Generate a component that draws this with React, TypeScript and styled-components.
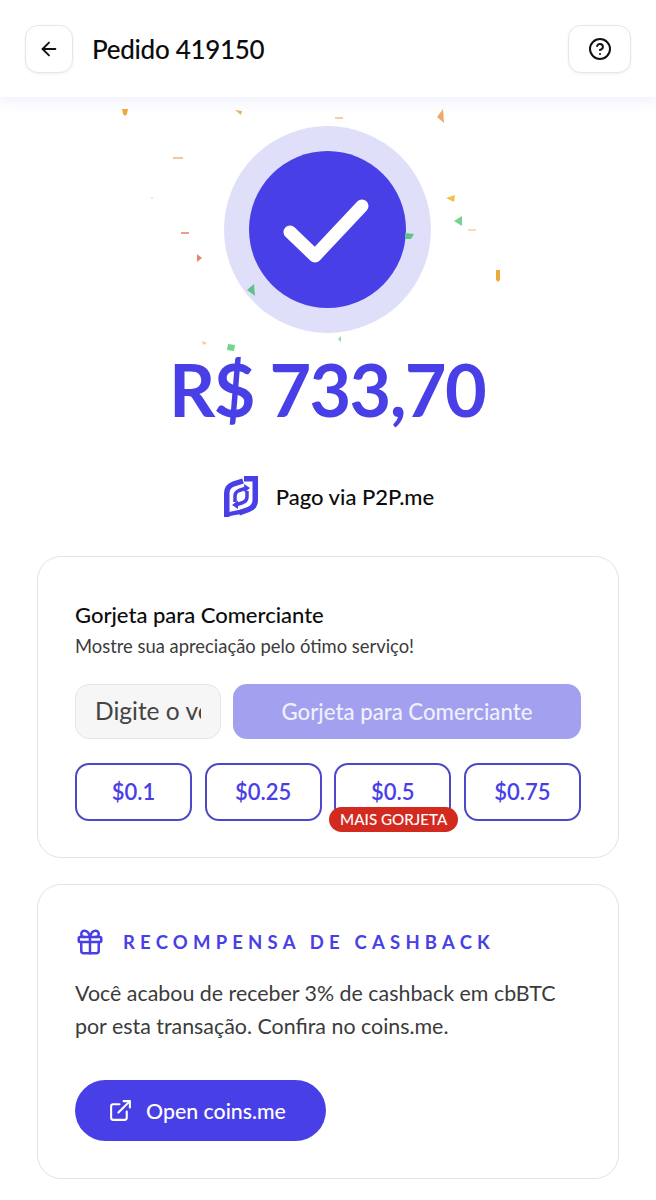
import React from "react";
import styled, { createGlobalStyle } from "styled-components";
import { ArrowLeft, CircleHelp, Gift, ExternalLink } from "lucide-react";

const FONT = `Lato, "Noto Sans", "Liberation Sans", sans-serif`;
const INDIGO = "#4840e6";

const Global = createGlobalStyle`
  html, body { margin: 0; padding: 0; background: #fff; }
  body { font-family: ${FONT}; color: #0c0c0c; }
  * { box-sizing: border-box; }
`;

const Page = styled.div`
  position: relative;
  width: 656px;
  height: 1200px;
  overflow: hidden;
  background: #fff;
`;

const Header = styled.header`
  height: 97px;
  display: flex;
  align-items: center;
  padding: 0 25px;
  gap: 19px;
  background: #fff;
  box-shadow: 0 3px 14px rgba(72, 64, 230, 0.1);
`;

const IconButton = styled.button<{ $w: number }>`
  width: ${(p) => p.$w}px;
  height: 48px;
  display: flex;
  align-items: center;
  justify-content: center;
  padding: 0;
  background: #fff;
  color: #111;
  border: 1.5px solid #e6e6e6;
  border-radius: 13px;
  box-shadow: 0 1px 3px rgba(0, 0, 0, 0.06);
`;

const Title = styled.h1`
  flex: 1;
  margin: 0;
  font-size: 26px;
  font-weight: 500;
  letter-spacing: -0.3px;
`;

const Hero = styled.section`
  display: flex;
  flex-direction: column;
  align-items: center;
  padding: 29px 2px 0 0;
`;

const Ring = styled.div`
  width: 207px;
  height: 207px;
  border-radius: 50%;
  background: #e0dff9;
  display: flex;
  align-items: center;
  justify-content: center;
`;

const Disc = styled.div`
  width: 157px;
  height: 157px;
  border-radius: 50%;
  background: ${INDIGO};
  display: flex;
  align-items: center;
  justify-content: center;
`;

const Amount = styled.div`
  margin-top: 10px;
  height: 92px;
  line-height: 92px;
  font-size: 72px;
  font-weight: 700;
  letter-spacing: -1.7px;
  color: ${INDIGO};
`;

const Via = styled.div`
  margin-top: 40px;
  height: 42px;
  padding-left: 4px;
  display: flex;
  align-items: center;
  gap: 18px;
  font-size: 22px;
  font-weight: 500;
`;

const Confetti = styled.svg`
  position: absolute;
  left: 0;
  top: 0;
  pointer-events: none;
`;

const Card = styled.section<{ $top: number; $h: number; $pad: number }>`
  width: 582px;
  height: ${(p) => p.$h}px;
  margin: ${(p) => p.$top}px 0 0 37px;
  padding: ${(p) => p.$pad}px 37px 0;
  border: 1.5px solid #e3e3e3;
  border-radius: 24px;
  background: #fff;
`;

const CardTitle = styled.h2`
  margin: 0;
  font-size: 22px;
  line-height: 28px;
  font-weight: 500;
`;

const CardSub = styled.p`
  margin: 4px 0 0;
  font-size: 18.4px;
  line-height: 26px;
  font-weight: 400;
  color: #3b3b3b;
`;

const TipRow = styled.div`
  display: flex;
  gap: 12px;
  margin-top: 25px;
`;

const TipInput = styled.input`
  width: 146px;
  height: 55px;
  padding: 0 19px 2px;
  font-family: ${FONT};
  font-size: 24.5px;
  background: #f6f6f6;
  border: 1.5px solid #e6e6e6;
  border-radius: 14px;
  outline: none;
  &::placeholder { color: #444; opacity: 1; }
`;

const TipButton = styled.button`
  flex: 1;
  height: 55px;
  border: none;
  border-radius: 14px;
  background: #a3a0f0;
  color: #f0f0fe;
  font-family: ${FONT};
  font-size: 22.2px;
  font-weight: 500;
`;

const Chips = styled.div`
  display: grid;
  grid-template-columns: repeat(4, 1fr);
  gap: 12.5px;
  margin-top: 24px;
`;

const Chip = styled.button`
  position: relative;
  height: 58px;
  background: #fff;
  border: 2px solid #4f47c9;
  border-radius: 14px;
  color: ${INDIGO};
  font-family: ${FONT};
  font-size: 22px;
  font-weight: 600;
  padding: 0 0 1px;
`;

const Badge = styled.span`
  position: absolute;
  left: -7px;
  bottom: -13px;
  width: 129px;
  height: 25px;
  line-height: 25px;
  border-radius: 13px;
  background: #d32a20;
  color: #fff;
  font-size: 15.2px;
  font-weight: 500;
  text-align: center;
`;

const RewardHead = styled.div`
  display: flex;
  align-items: center;
  gap: 18px;
`;

const RewardTitle = styled.h2`
  margin: 0;
  font-size: 18.5px;
  font-weight: 700;
  letter-spacing: 5.2px;
  color: ${INDIGO};
  white-space: nowrap;
`;

const RewardText = styled.p`
  margin: 20px 0 0;
  font-size: 21.4px;
  line-height: 33px;
  color: #3b3b3b;
`;

const OpenButton = styled.button`
  display: flex;
  align-items: center;
  justify-content: center;
  gap: 13px;
  width: 251px;
  height: 61px;
  margin-top: 37px;
  padding: 0 7px 0 0;
  border: none;
  border-radius: 31px;
  background: ${INDIGO};
  color: #fff;
  font-family: ${FONT};
  font-size: 21.3px;
  font-weight: 500;
`;

const pieces: { d: string; fill: string }[] = [
  { d: "M122 109h6l-1 5-2 2-2-2z", fill: "#f0a83c" },
  { d: "M235 110l7 1-1 4z", fill: "#e9b262" },
  { d: "M335 117h8v2h-8z", fill: "#f2cf9c" },
  { d: "M437 117l6-8 1 14z", fill: "#f0a868" },
  { d: "M173 157h10v2h-10z", fill: "#f2c79c" },
  { d: "M151 197h2v2h-2z", fill: "#f5ecc8" },
  { d: "M446 198l9-3-1 7z", fill: "#efc24e" },
  { d: "M454 221l8-5v10z", fill: "#74d48c" },
  { d: "M468 229h8v2h-8z", fill: "#f5dcb6" },
  { d: "M181 232h8v2h-8z", fill: "#ee9f7e" },
  { d: "M405 233l9 1-3 5-6 0z", fill: "#62c08a" },
  { d: "M197 254l5 4-5 4z", fill: "#e8836e" },
  { d: "M496 270h4v10l-2 2-2-2z", fill: "#f0a83c" },
  { d: "M247 290l7-6 1 12z", fill: "#62c08a" },
  { d: "M202 341l5 2-4 2z", fill: "#f2c9a8" },
  { d: "M228 344l7 1-1 6-7-1z", fill: "#74d48c" },
  { d: "M338 339l3-3v6z", fill: "#8cdca0" },
];

const P2PLogo = () => (
  <svg width="34" height="41" viewBox="0 0 34 41" fill="none" aria-hidden="true">
    <g stroke="#4840e6">
      <path strokeWidth="5.5" d="M2.75 41V17C2.75 12.5 5.5 9.5 9.5 8L19 5" />
      <path strokeWidth="5.5" d="M20 2.75H31.25V24C31.25 29 28.5 32 24.5 33.5L15 37" />
      <path strokeWidth="3.5" d="M11 26V20C11 17 12.5 15.5 15 14.5L21 12.5" />
      <path strokeWidth="3.5" d="M23 15V21C23 24 21.5 25.5 19 26.5L13 28.5" />
    </g>
    <path fill="#4840e6" d="M20 8l6 4-5.5 4.5zM14 24.5l-6 4.5 6 4z" />
    <path fill="#4840e6" d="M0 41V37L17 33.5V38z" />
  </svg>
);

export default function App() {
  return (
    <Page>
      <Global />
      <Header>
        <IconButton $w={48} aria-label="Voltar">
          <ArrowLeft size={22} strokeWidth={2} />
        </IconButton>
        <Title>Pedido 419150</Title>
        <IconButton $w={63} aria-label="Ajuda">
          <CircleHelp size={24} strokeWidth={2} />
        </IconButton>
      </Header>
      <Hero>
        <Ring>
          <Disc>
            <svg width="157" height="157" viewBox="0 0 157 157" fill="none" aria-hidden="true">
              <path d="M41 81L66 105L113 55" stroke="#fff" strokeWidth="13" strokeLinecap="round" strokeLinejoin="round" />
            </svg>
          </Disc>
        </Ring>
        <Amount>R$ 733,70</Amount>
        <Via>
          <P2PLogo />
          Pago via P2P.me
        </Via>
      </Hero>
      <Card $top={39} $h={302} $pad={44}>
        <CardTitle>Gorjeta para Comerciante</CardTitle>
        <CardSub>Mostre sua apreciação pelo ótimo serviço!</CardSub>
        <TipRow>
          <TipInput placeholder="Digite o volume" />
          <TipButton>Gorjeta para Comerciante</TipButton>
        </TipRow>
        <Chips>
          <Chip>$0.1</Chip>
          <Chip>$0.25</Chip>
          <Chip>
            $0.5
            <Badge>MAIS GORJETA</Badge>
          </Chip>
          <Chip>$0.75</Chip>
        </Chips>
      </Card>
      <Card $top={26} $h={295} $pad={42}>
        <RewardHead>
          <Gift size={30} color={INDIGO} strokeWidth={2} />
          <RewardTitle>RECOMPENSA DE CASHBACK</RewardTitle>
        </RewardHead>
        <RewardText>
          Você acabou de receber 3% de cashback em cbBTC
          <br />
          por esta transação. Confira no coins.me.
        </RewardText>
        <OpenButton>
          <ExternalLink size={25} strokeWidth={2} />
          Open coins.me
        </OpenButton>
      </Card>
      <Confetti width="656" height="400" viewBox="0 0 656 400" aria-hidden="true">
        {pieces.map((p, i) => (
          <path key={i} d={p.d} fill={p.fill} />
        ))}
      </Confetti>
    </Page>
  );
}
